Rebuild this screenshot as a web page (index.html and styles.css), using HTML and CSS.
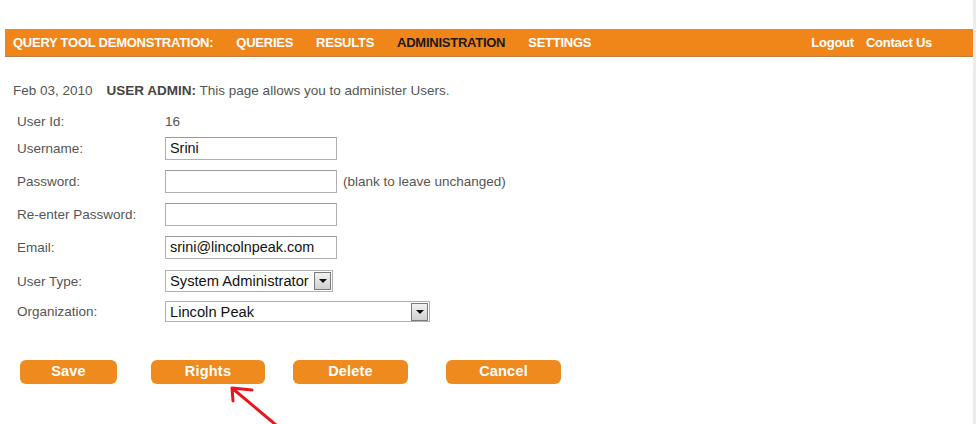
FILE: index.html
```html
<!DOCTYPE html>
<html>
<head>
<meta charset="utf-8">
<link rel="stylesheet" href="styles.css">
</head>
<body>
<div class="page">
  <div class="navbar">
    <span class="nav-item">QUERY TOOL DEMONSTRATION:</span>
    <span class="nav-item">QUERIES</span>
    <span class="nav-item">RESULTS</span>
    <span class="nav-item active">ADMINISTRATION</span>
    <span class="nav-item">SETTINGS</span>
    <span class="nav-spacer"></span>
    <span class="nav-item">Logout</span>
    <span class="nav-item">Contact Us</span>
  </div>

  <div class="intro">
    <span class="date">Feb 03, 2010</span>
    <span><b>USER ADMIN:</b> This page allows you to administer Users.</span>
  </div>

  <div class="form">
    <div class="row row-id">
      <span class="label">User Id:</span>
      <span class="value">16</span>
    </div>
    <div class="row">
      <span class="label">Username:</span>
      <span class="input">Srini</span>
    </div>
    <div class="row">
      <span class="label">Password:</span>
      <span class="input"></span>
      <span class="hint">(blank to leave unchanged)</span>
    </div>
    <div class="row">
      <span class="label">Re-enter Password:</span>
      <span class="input"></span>
    </div>
    <div class="row">
      <span class="label">Email:</span>
      <span class="input">srini@lincolnpeak.com</span>
    </div>
    <div class="row row-type">
      <span class="label">User Type:</span>
      <span class="select select-type"><span class="select-text">System Administrator</span><span class="select-btn"><span class="tri"></span></span></span>
    </div>
    <div class="row row-org">
      <span class="label">Organization:</span>
      <span class="select select-org"><span class="select-text">Lincoln Peak</span><span class="select-btn"><span class="tri"></span></span></span>
    </div>
  </div>

  <div class="buttons">
    <span class="btn btn-save">Save</span>
    <span class="btn btn-rights">Rights</span>
    <span class="btn btn-delete">Delete</span>
    <span class="btn btn-cancel">Cancel</span>
  </div>

  <svg class="arrow" width="70" height="44" viewBox="0 0 70 44">
    <path d="M12 8 L62 50 M12 8 L32 10 M12 8 L13 21" fill="none" stroke="#e8161c" stroke-width="3" stroke-linecap="round" stroke-linejoin="round"/>
  </svg>
</div>
</body>
</html>
```

FILE: styles.css
```css
html, body {
  margin: 0;
  padding: 0;
  background: #fff;
  overflow: hidden;
}
body {
  font-family: "Liberation Sans", Arial, sans-serif;
  font-size: 13.5px;
  color: #555;
}
.page {
  width: 968px;
  height: 395px;
  padding: 29px 0 0 5px;
  border-right: 3px solid #ececec;
  position: relative;
  overflow: hidden;
}
.navbar {
  height: 27px;
  background: #f0861a;
  border-bottom: 1px solid #b9804a;
  display: flex;
  align-items: center;
  padding: 0 41px 0 8px;
  gap: 23px;
  font-weight: bold;
  font-size: 13px;
  letter-spacing: -0.25px;
  color: #fff;
}
.nav-item {
  white-space: nowrap;
}
.nav-item.active {
  color: #1a1a1a;
}
.nav-spacer {
  flex: 1;
}
.navbar .nav-item:last-child {
  margin-left: -11px;
}
.intro {
  display: flex;
  gap: 14px;
  padding: 26px 0 0 8px;
  color: #555;
  line-height: 15px;
}
.intro b {
  color: #444;
}
.form {
  padding: 16px 0 0 12px;
  display: flex;
  flex-direction: column;
  gap: 10px;
}
.row {
  display: flex;
  align-items: center;
  height: 23px;
}
.row-id {
  height: 14px;
  margin-bottom: -1px;
}
.row-type {
  height: 22px;
  margin-top: 1px;
}
.row-org {
  height: 21px;
  margin-top: -1px;
}
.label {
  width: 148px;
  flex: none;
  color: #555;
}
.value {
  color: #555;
}
.input {
  width: 166px;
  height: 21px;
  border: 1px solid #b0b0b0;
  border-top-color: #9a9a9a;
  font-size: 14.4px;
  color: #111;
  line-height: 21px;
  padding-left: 4px;
}
.hint {
  margin-left: 6px;
  color: #555;
}
.select {
  height: 100%;
  box-sizing: border-box;
  border: 1px solid #b0b0b0;
  display: flex;
  align-items: center;
  justify-content: space-between;
  font-size: 14.7px;
  color: #111;
  padding-left: 4px;
  padding-right: 1px;
}
.select-type {
  width: 168px;
}
.select-org {
  width: 265px;
}
.select-btn {
  width: 15px;
  height: 16px;
  border: 1px solid #7a7a7a;
  background: linear-gradient(#f2f2f2, #d0d0d0);
  display: flex;
  align-items: center;
  justify-content: center;
}
.tri {
  width: 0;
  height: 0;
  border-left: 4px solid transparent;
  border-right: 4px solid transparent;
  border-top: 4px solid #111;
}
.buttons {
  display: flex;
  padding: 38px 0 0 15px;
}
.btn {
  height: 24px;
  background: #ee8a1e;
  border-radius: 6px;
  color: #fff;
  font-weight: bold;
  font-size: 14.5px;
  display: flex;
  align-items: center;
  justify-content: center;
  padding-bottom: 2px;
  box-sizing: border-box;
  letter-spacing: 0.2px;
}
.btn-save { width: 97px; }
.btn-rights { width: 114px; margin-left: 34px; }
.btn-delete { width: 115px; margin-left: 28px; }
.btn-cancel { width: 115px; margin-left: 38px; }
.arrow {
  position: absolute;
  left: 220px;
  top: 380px;
}
```
